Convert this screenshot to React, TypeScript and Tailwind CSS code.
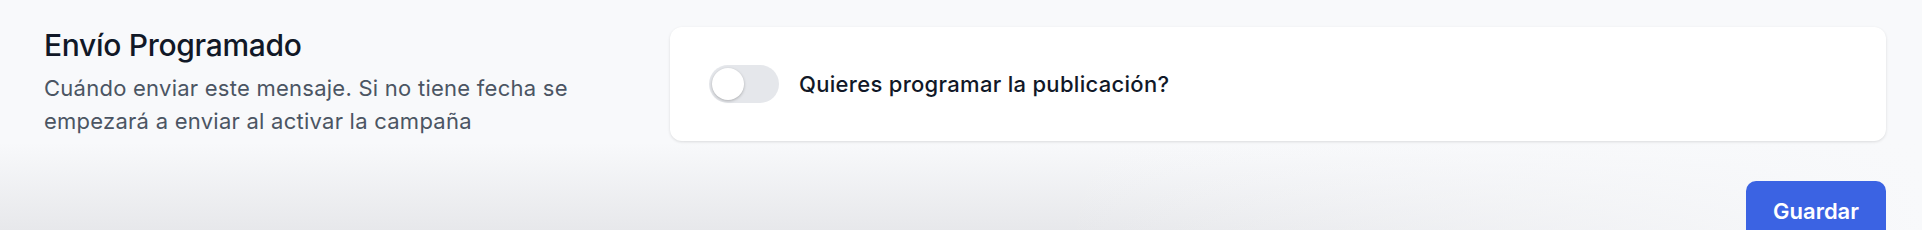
import { useState } from "react";

function Toggle() {
  const [on, setOn] = useState(false);
  return (
    <button
      type="button"
      onClick={() => setOn(!on)}
      className={`flex h-[38px] w-[70px] shrink-0 items-center rounded-full p-[3px] ${
        on ? "justify-end bg-[#3b63e3]" : "justify-start bg-[#e5e7eb]"
      }`}
    >
      <span className="h-[32px] w-[32px] rounded-full bg-white shadow-[0_1px_3px_rgba(0,0,0,0.25)]" />
    </button>
  );
}

export default function App() {
  return (
    <main className="h-[230px] w-full overflow-hidden bg-[linear-gradient(to_right,rgba(248,249,251,0)_55%,#f8f9fb_100%),linear-gradient(to_bottom,#f8f9fb_62%,#e7e8eb_100%)] font-['Inter',sans-serif]">
      <div className="pl-[44px] pr-[36px] pt-[27px]">
        <div className="grid grid-cols-3 gap-[36px]">
          <div className="flex flex-col">
            <h2 className="text-[30px] leading-[36px] font-medium tracking-[-0.3px] text-[#111827]">
              Envío Programado
            </h2>
            <p className="mt-[9px] w-[580px] text-[22px] leading-[33px] tracking-[0.25px] text-[#4b5563]">
              Cuándo enviar este mensaje. Si no tiene fecha se empezará a enviar al activar la campaña
            </p>
          </div>
          <div className="col-span-2 flex h-[114px] items-center gap-[20px] rounded-[12px] bg-white px-[39px] shadow-[0_1px_3px_rgba(0,0,0,0.12)]">
            <Toggle />
            <span className="text-[22px] font-medium tracking-[0.3px] text-[#111827]">
              Quieres programar la publicación?
            </span>
          </div>
        </div>
        <div className="mt-[40px] flex justify-end">
          <button
            type="button"
            className="h-[60px] rounded-[10px] bg-[#3b63e3] px-[27px] text-[22px] font-semibold text-white"
          >
            Guardar
          </button>
        </div>
      </div>
    </main>
  );
}
